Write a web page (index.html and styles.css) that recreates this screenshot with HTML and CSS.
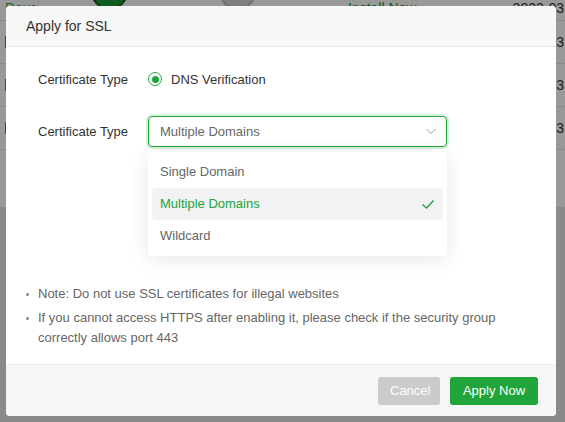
FILE: index.html
```html
<!DOCTYPE html>
<html lang="en">
<head>
  <meta charset="UTF-8">
  <title>Apply for SSL</title>
  <link rel="stylesheet" href="styles.css">
</head>
<body>
  <div class="page">
    <div class="table">
      <div class="row first">
        <span class="cell days">Days</span>
        <span class="switch on"></span>
        <span class="switch"></span>
        <span class="link">Install Now</span>
        <span class="date">2023-03</span>
      </div>
      <div class="row">
        <span class="cell days"><i class="mark"></i></span>
        <span class="date">2023-03</span>
      </div>
      <div class="row">
        <span class="cell days"><i class="mark"></i></span>
        <span class="date">2023-03</span>
      </div>
      <div class="row">
        <span class="cell days"><i class="mark"></i></span>
        <span class="date">2023-03</span>
      </div>
    </div>
  </div>
  <div class="mask"></div>

  <div class="dialog">
    <div class="dialog-header">Apply for SSL</div>
    <div class="dialog-body">
      <div class="form-row">
        <label class="form-label">Certificate Type</label>
        <div class="radio">
          <span class="radio-dot"></span>
          <span>DNS Verification</span>
        </div>
      </div>
      <div class="form-row">
        <label class="form-label">Certificate Type</label>
        <div class="select">
          <span>Multiple Domains</span>
          <svg class="arrow" width="12" height="12" viewBox="0 0 12 12">
            <path d="M1.5 4 L6 8.5 L10.5 4" fill="none" stroke="#c0c4cc" stroke-width="1.2"/>
          </svg>
          <ul class="dropdown">
            <li>Single Domain</li>
            <li class="selected">Multiple Domains
              <svg width="14" height="14" viewBox="0 0 14 14">
                <path d="M1.5 7.5 L5.5 11 L12.5 3.5" fill="none" stroke="#20a53a" stroke-width="1.4"/>
              </svg>
            </li>
            <li>Wildcard</li>
          </ul>
        </div>
      </div>
      <ul class="notes">
        <li>Note: Do not use SSL certificates for illegal websites</li>
        <li>If you cannot access HTTPS after enabling it, please check if the security group correctly allows port 443</li>
      </ul>
    </div>
    <div class="dialog-footer">
      <button class="btn btn-cancel">Cancel</button>
      <button class="btn btn-primary">Apply Now</button>
    </div>
  </div>
</body>
</html>
```

FILE: styles.css
```css
body {
  margin: 0;
  font-family: 'Liberation Sans', Arial, sans-serif;
  background-color: #e6e6e6;
  height: 422px;
  overflow: hidden;
}
.page {
  height: 207px;
  background-color: #fff;
}
.row {
  display: flex;
  align-items: center;
  height: 42px;
  border-bottom: 1px solid #e4e4e4;
  font-size: 14px;
  color: #333;
}
.row.first {
  height: 20px;
  align-items: flex-start;
  line-height: 16px;
}
.days {
  width: 33px;
  padding-left: 5px;
  color: #20a53a;
  border-right: 1px solid #e4e4e4;
  align-self: stretch;
  display: flex;
  align-items: center;
}
.row.first .days {
  align-items: flex-start;
}
.mark {
  display: block;
  width: 2px;
  height: 12px;
  background-color: #20a53a;
}
.switch {
  width: 33px;
  height: 33px;
  margin-top: -27px;
  border-radius: 50%;
  background-color: #d4d4d4;
  border: 2px solid #bbb;
  margin-left: 91px;
}
.switch.on {
  background-color: #1a9a33;
  border-color: #0d5e18;
  margin-left: 52px;
}
.link {
  color: #1c8f33;
  margin-left: 92px;
}
.date {
  margin-left: auto;
  padding-right: 1px;
}
.mask {
  position: fixed;
  top: 0;
  left: 0;
  right: 0;
  bottom: 0;
  background-color: rgba(0, 0, 0, 0.4);
}
.dialog {
  position: absolute;
  top: 6px;
  left: 6px;
  width: 550px;
  height: 410px;
  background-color: #fff;
  border-radius: 4px;
  display: flex;
  flex-direction: column;
}
.dialog-header {
  height: 40px;
  line-height: 40px;
  padding-left: 20px;
  font-size: 14px;
  color: #333;
  background-color: #f7f7f7;
  border-bottom: 1px solid #e8e8e8;
  border-radius: 4px 4px 0 0;
}
.dialog-body {
  flex: 1;
  padding: 16px 0 0 32px;
}
.form-row {
  display: flex;
  align-items: center;
  height: 32px;
  margin-bottom: 20px;
  font-size: 13px;
  color: #333;
}
.form-label {
  width: 110px;
}
.radio {
  display: flex;
  align-items: center;
  gap: 9px;
}
.radio-dot {
  width: 12px;
  height: 12px;
  border: 1.5px solid #20a53a;
  border-radius: 50%;
  position: relative;
}
.radio-dot::after {
  content: '';
  position: absolute;
  top: 2.5px;
  left: 2.5px;
  width: 7px;
  height: 7px;
  border-radius: 50%;
  background-color: #20a53a;
}
.select {
  position: relative;
  box-sizing: border-box;
  width: 299px;
  height: 31px;
  border: 1px solid #20a53a;
  border-radius: 4px;
  box-shadow: 0 0 0 2px rgba(32, 165, 58, 0.18);
  display: flex;
  align-items: center;
  padding-left: 11px;
  color: #666;
}
.select .arrow {
  margin-left: auto;
  margin-right: 9px;
}
.dropdown {
  position: absolute;
  top: 35px;
  left: -1px;
  width: 291px;
  margin: 0;
  padding: 4px;
  list-style: none;
  background-color: #fff;
  border-radius: 4px;
  box-shadow: 0 3px 20px rgba(0, 0, 0, 0.1);
  z-index: 10;
}
.dropdown li {
  display: flex;
  align-items: center;
  justify-content: space-between;
  height: 32px;
  padding: 0 8px;
  color: #666;
  border-radius: 4px;
}
.dropdown li.selected {
  background-color: #f2f2f4;
  color: #20a53a;
}
.notes {
  margin: 137px 0 0 0;
  padding: 0 30px 0 0;
  font-size: 13px;
  color: #666;
  list-style: none;
}
.notes li {
  position: relative;
  line-height: 20px;
  margin-bottom: 4px;
}
.notes li::before {
  content: '';
  position: absolute;
  left: -12px;
  top: 9px;
  width: 3px;
  height: 3px;
  border-radius: 50%;
  background-color: #888;
}
.dialog-footer {
  height: 51px;
  border-top: 1px solid #e8ecea;
  background-color: #f5f7f6;
  display: flex;
  align-items: center;
  justify-content: flex-end;
  gap: 10px;
  padding-right: 18px;
  border-radius: 0 0 4px 4px;
}
.btn {
  height: 28px;
  border: none;
  border-radius: 3px;
  color: #fff;
  font-family: inherit;
  font-size: 13px;
  padding: 0 12px;
}
.btn-cancel {
  width: 62px;
  background-color: #cbcbcb;
}
.btn-primary {
  width: 88px;
  background-color: #20a53a;
}
```
